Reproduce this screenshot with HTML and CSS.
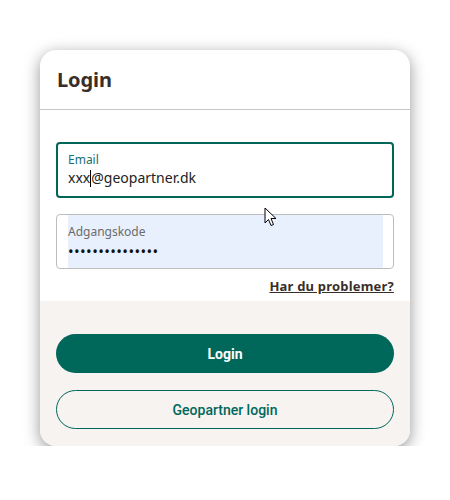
FILE: index.html
```html
<!DOCTYPE html>
<html lang="da">
<head>
<meta charset="utf-8">
<link rel="stylesheet" href="styles.css">
</head>
<body>
<div class="card">
  <div class="card-header">
    <h1 class="title">Login</h1>
  </div>
  <div class="card-body">
    <div class="field field-focus">
      <span class="field-label label-focus">Email</span>
      <span class="field-value">xxx<span class="caret"></span>@geopartner.dk</span>
    </div>
    <div class="field field-pw">
      <div class="autofill">
        <span class="field-label">Adgangskode</span>
        <span class="field-value dots">•••••••••••••••</span>
      </div>
    </div>
    <div class="help-row"><a class="help-link" href="#">Har du problemer?</a></div>
  </div>
  <div class="card-footer">
    <button class="btn btn-primary">Login</button>
    <button class="btn btn-outline">Geopartner login</button>
  </div>
  <svg class="pointer" width="14" height="20" viewBox="0 0 14 20">
    <path d="M1 1 L1 16 L4.5 12.5 L7 18.5 L9.5 17.5 L7 11.5 L12 11.5 Z" fill="#fff" stroke="#000" stroke-width="1" stroke-linejoin="round"/>
  </svg>
</div>
</body>
</html>
```
FILE: styles.css
```css
html, body {
  margin: 0;
  padding: 0;
  background: #ffffff;
}
body {
  padding: 50px 40px 0 40px;
  font-family: "Noto Sans", "Open Sans", sans-serif;
}
.card {
  position: relative;
  width: 370px;
  border-radius: 16px;
  overflow: hidden;
  background: #ffffff;
  box-shadow: 0 4px 16px rgba(0, 0, 0, 0.42);
}
.card-header {
  height: 59px;
  border-bottom: 1px solid #c8c8c8;
  display: flex;
  align-items: center;
  padding-left: 17px;
}
.title {
  margin: 0;
  font-family: "Noto Sans", sans-serif;
  font-weight: 700;
  font-size: 20px;
  color: #3a2e28;
  letter-spacing: -0.1px;
}
.card-body {
  padding: 32px 16px 0 16px;
  display: flex;
  flex-direction: column;
  height: 159px;
}
.field {
  box-sizing: border-box;
  height: 56px;
  border-radius: 4px;
  font-family: "Noto Sans", sans-serif;
}
.field-focus {
  border: 2px solid #00665a;
  padding: 8px 10px 0 10px;
  display: flex;
  flex-direction: column;
}
.field-pw {
  margin-top: 16px;
  border: 1px solid #bdbdbd;
  height: 55px;
  padding: 0 10px 0 11px;
  display: flex;
}
.autofill {
  flex: 1;
  background: #e8f0fe;
  display: flex;
  flex-direction: column;
  padding-top: 9px;
}
.field-label {
  font-size: 12px;
  line-height: 16px;
  color: #6b6b6b;
}
.label-focus {
  color: #1b6e73;
}
.field-value {
  font-size: 14px;
  line-height: 20px;
  color: #222;
  position: relative;
}
.dots {
  font-size: 15px;
  letter-spacing: 0.4px;
  color: #111;
  line-height: 18px;
  margin-top: 2px;
}
.caret {
  display: inline-block;
  width: 1px;
  height: 17px;
  background: #000;
  vertical-align: -4px;
}
.help-row {
  display: flex;
  justify-content: flex-end;
  margin-top: 8px;
}
.help-link {
  font-size: 13px;
  font-weight: 700;
  color: #3a2e28;
  text-decoration: underline;
  letter-spacing: 0.2px;
}
.card-footer {
  background: #f6f3f0;
  padding: 33px 16px 17px 16px;
  display: flex;
  flex-direction: column;
  gap: 17px;
}
.btn {
  height: 39px;
  border-radius: 20px;
  font-family: Roboto, sans-serif;
  font-size: 14px;
  cursor: pointer;
}
.btn-primary {
  background: #00675b;
  color: #fff;
  border: none;
  font-weight: 700;
}
.btn-outline {
  background: transparent;
  border: 1px solid #00675b;
  color: #00675b;
  font-weight: 500;
}
.pointer {
  position: absolute;
  left: 224px;
  top: 157px;
}
```
